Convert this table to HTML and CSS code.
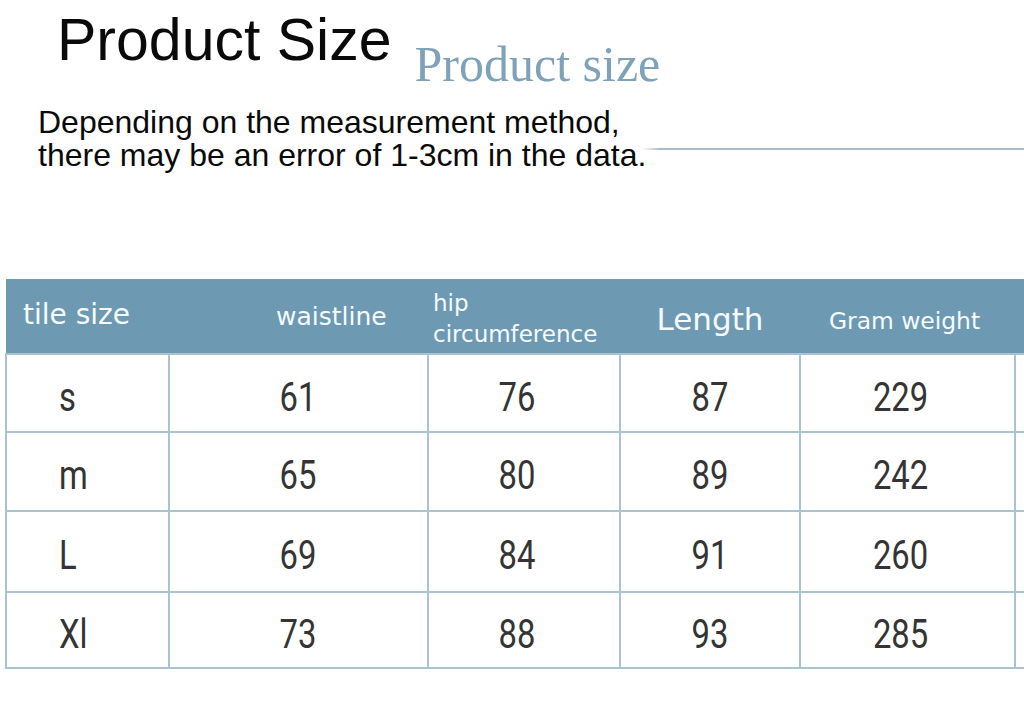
FILE: index.html
```html
<!DOCTYPE html>
<html lang="en">
<head>
<meta charset="utf-8">
<title>Product Size</title>
<link rel="stylesheet" href="styles.css">
</head>
<body>
<div class="page">
  <header class="intro">
    <div class="title-row">
      <h1 class="title">Product Size</h1>
      <span class="subtitle">Product size</span>
    </div>
    <div class="desc-row">
      <p class="desc">Depending on the measurement method,<br>there may be an error of 1-3cm in the data.</p>
      <div class="rule"></div>
    </div>
  </header>

  <div class="table-wrap">
    <table class="size-table">
      <colgroup>
        <col class="c1"><col class="c2"><col class="c3"><col class="c4"><col class="c5"><col class="c6">
      </colgroup>
      <thead>
        <tr>
          <th class="h-tile">tile size</th>
          <th class="h-waist">waistline</th>
          <th class="h-hip">hip<br>circumference</th>
          <th class="h-length">Length</th>
          <th class="h-gram">Gram weight</th>
          <th class="h-extra"></th>
        </tr>
      </thead>
      <tbody>
        <tr class="r1">
          <td class="size"><span class="n">s</span></td>
          <td><span class="n">61</span></td>
          <td class="shift"><span class="n">76</span></td>
          <td><span class="n">87</span></td>
          <td class="shift"><span class="n">229</span></td>
          <td></td>
        </tr>
        <tr class="r2">
          <td class="size"><span class="n">m</span></td>
          <td><span class="n">65</span></td>
          <td class="shift"><span class="n">80</span></td>
          <td><span class="n">89</span></td>
          <td class="shift"><span class="n">242</span></td>
          <td></td>
        </tr>
        <tr class="r3">
          <td class="size"><span class="n">L</span></td>
          <td><span class="n">69</span></td>
          <td class="shift"><span class="n">84</span></td>
          <td><span class="n">91</span></td>
          <td class="shift"><span class="n">260</span></td>
          <td></td>
        </tr>
        <tr class="r4">
          <td class="size"><span class="n">Xl</span></td>
          <td><span class="n">73</span></td>
          <td class="shift"><span class="n">88</span></td>
          <td><span class="n">93</span></td>
          <td class="shift"><span class="n">285</span></td>
          <td></td>
        </tr>
      </tbody>
    </table>
  </div>
</div>
</body>
</html>
```

FILE: styles.css
```css
html, body {
  margin: 0;
  padding: 0;
  background: #ffffff;
}

body {
  width: 1024px;
  height: 711px;
  overflow: hidden;
}

.page {
  width: 1024px;
  overflow: hidden;
}

.intro {
  padding-top: 11px;
}

.title-row {
  display: flex;
  align-items: flex-start;
  padding-left: 57px;
}

.title {
  margin: 0;
  font-family: "Liberation Sans", Arial, sans-serif;
  font-weight: normal;
  font-size: 59px;
  line-height: 59px;
  color: #0a0a0a;
  white-space: nowrap;
}

.subtitle {
  margin-left: 23px;
  margin-top: 28px;
  font-family: "Liberation Serif", "Times New Roman", serif;
  font-size: 50px;
  line-height: 51px;
  color: #7fa2b8;
  white-space: nowrap;
}

.desc-row {
  display: flex;
  align-items: flex-start;
  margin-top: 16px;
  padding-left: 38px;
}

.desc {
  margin: 0;
  font-family: "Liberation Sans", Arial, sans-serif;
  font-size: 32px;
  line-height: 33px;
  color: #0a0a0a;
  white-space: nowrap;
}

.rule {
  flex: 1;
  height: 2px;
  margin-top: 42px;
  margin-left: -4px;
  background: linear-gradient(to right, rgba(168, 188, 203, 0) 0, #a8bccb 18px, #a8bccb 100%);
}

.table-wrap {
  margin-top: 107px;
  padding-left: 5px;
  width: 1400px;
}

.size-table {
  border-collapse: collapse;
  table-layout: fixed;
  width: 1310px;
}

.c1 { width: 163px; }
.c2 { width: 259px; }
.c3 { width: 192px; }
.c4 { width: 180px; }
.c5 { width: 215px; }
.c6 { width: 301px; }

.size-table thead tr {
  height: 75px;
}

.size-table th {
  background: #6d9ab2;
  color: #f6fafc;
  font-family: "DejaVu Sans", Verdana, sans-serif;
  font-weight: normal;
  vertical-align: top;
  padding: 0;
  border-bottom: 2px solid #a9c3d3;
  white-space: nowrap;
}

.h-tile {
  font-size: 28px;
  line-height: 28px;
  padding-top: 22px !important;
  padding-left: 17px !important;
  text-align: left;
}

.h-waist {
  font-size: 25px;
  line-height: 25px;
  padding-top: 25px !important;
  padding-left: 107px !important;
  text-align: left;
}

.h-hip {
  font-size: 23px;
  line-height: 31px;
  padding-top: 9px !important;
  padding-left: 5px !important;
  text-align: left;
}

.h-length {
  font-size: 31px;
  line-height: 31px;
  padding-top: 25px !important;
  text-align: center;
}

.h-gram {
  font-size: 23.4px;
  line-height: 24px;
  padding-top: 30px !important;
  padding-right: 6px !important;
  text-align: center;
}

.size-table td {
  border: 2px solid #a9c3d3;
  text-align: center;
  vertical-align: middle;
  padding: 8px 0 0 0;
  font-family: Roboto, "Liberation Sans", sans-serif;
  font-size: 41px;
  line-height: 41px;
  color: #343434;
}

.size-table td.size {
  text-align: left;
  padding-left: 52px;
}

.size-table td.shift {
  padding-right: 14px;
}

.r1 { height: 78px; }
.r2 { height: 79px; }
.r3 { height: 81px; }
.r4 { height: 76px; }

.n {
  display: inline-block;
  transform: scaleX(0.8);
  transform-origin: center;
}

.size .n {
  transform-origin: left center;
}
```
